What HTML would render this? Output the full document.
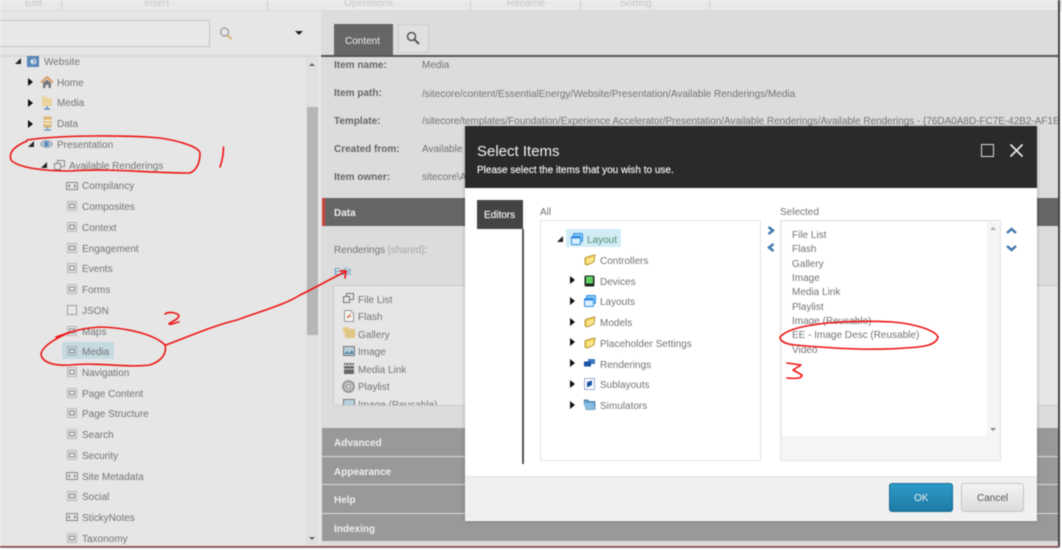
<!DOCTYPE html>
<html>
<head>
<meta charset="utf-8">
<style>
html,body{margin:0;padding:0;background:#fff}
#p{position:relative;width:1062px;height:550px;overflow:hidden;background:#fff;font-family:"Liberation Sans",sans-serif;font-size:10px;color:#747474;filter:blur(.42px)}
#p div,#p span{position:absolute}
.t{white-space:nowrap;line-height:14px;height:14px;margin-top:2px}
.a{width:0;height:0;border-style:solid;border-width:4px 0 4px 5px;border-color:transparent transparent transparent #111}
.o{width:0;height:0;border-style:solid;border-width:0 0 6px 6px;border-color:transparent transparent #222 transparent}
.b{font-weight:bold;color:#666}
.h{color:#eee;font-weight:bold}
svg{position:absolute;overflow:visible}
</style>
</head>
<body>
<div id="p">
<svg width="0" height="0" style="position:absolute"><defs>
<symbol id="d" viewBox="0 0 11 11"><rect x=".5" y=".5" width="9" height="9" fill="none" stroke="#888" stroke-dasharray="1 1"/><rect x="2.5" y="3" width="5" height="4" fill="none" stroke="#888"/></symbol>
<symbol id="c" viewBox="0 0 12 8"><rect x=".5" y=".5" width="11" height="7" fill="none" stroke="#888"/><path d="M4 2.5L2.5 4 4 5.5M8 2.5L9.500 4 8 5.500" fill="none" stroke="#777"/></symbol>
<symbol id="f" viewBox="0 0 12 12"><path d="M1 4L3 3 8 1.500 11 1 10 8 3 11 1 10Z" fill="#f3cf55" stroke="#a88a2a" stroke-width=".8"/><path d="M3 5L10 3 9 8 3 10Z" fill="#fbe68c"/></symbol>
<symbol id="w" viewBox="0 0 12 12"><rect x="2.500" y=".5" width="9" height="8" rx="1" fill="#8cc8fa" stroke="#2f8de0"/><rect x=".5" y="3.500" width="9" height="8" rx="1" fill="#d8eeff" stroke="#2f8de0"/><rect x=".5" y="3.500" width="9" height="2" fill="#2f8de0"/></symbol>
</defs></svg>

<!-- ribbon -->
<div style="left:0;top:0;width:1062px;height:10px;background:#e9e9e9;border-bottom:1px solid #dcdcdc"></div>
<div style="left:61px;top:0;width:1px;height:10px;background:#d2d2d2"></div>
<div style="left:267px;top:0;width:1px;height:10px;background:#d2d2d2"></div>
<div style="left:470px;top:0;width:1px;height:10px;background:#d2d2d2"></div>
<div style="left:580px;top:0;width:1px;height:10px;background:#d2d2d2"></div>
<div style="left:709px;top:0;width:1px;height:10px;background:#d2d2d2"></div>
<div class="t" style="left:25px;top:-5px;color:#c8c8c8">Edit</div>
<div class="t" style="left:144px;top:-5px;color:#c8c8c8">Insert</div>
<div class="t" style="left:344px;top:-5px;color:#c8c8c8">Operations</div>
<div class="t" style="left:507px;top:-5px;color:#c8c8c8">Rename</div>
<div class="t" style="left:620px;top:-5px;color:#c8c8c8">Sorting</div>

<!-- left panel -->
<div style="left:0;top:11px;width:319px;height:535px;background:#e6e6e6"></div>
<div style="left:0;top:55px;width:319px;height:2px;background:#d8d8d8"></div>
<div style="left:-2px;top:20px;width:210px;height:25px;background:#e8e8e8;border:1px solid #c4c4c4"></div>
<svg style="left:219px;top:27px" width="14" height="14"><circle cx="5.500" cy="5" r="4" fill="none" stroke="#999" stroke-width="1.200"/><path d="M8.500 8.500L12.500 12" stroke="#d9b26a" stroke-width="2"/></svg>
<div style="left:295px;top:31px;border-style:solid;border-width:4px 4px 0 4px;border-color:#222 transparent transparent transparent;width:0;height:0"></div>
<div style="left:306px;top:57px;width:13px;height:489px;background:#e0e0e0"></div>
<div style="left:307px;top:107px;width:11px;height:228px;background:#b6b6b6"></div>
<div style="left:309px;top:63px;border-style:solid;border-width:0 3px 3px 3px;border-color:transparent transparent #666 transparent;width:0;height:0"></div>
<div style="left:309px;top:537px;border-style:solid;border-width:3px 3px 0 3px;border-color:#666 transparent transparent transparent;width:0;height:0"></div>
<div style="left:319px;top:11px;width:2px;height:535px;background:#e9e9e9"></div>

<!-- tree -->
<div class="o" style="left:15px;top:58px"></div>
<div style="left:27px;top:56px;width:12px;height:11px;background:#5a86b8"></div>
<svg style="left:30px;top:58px" width="7" height="7"><circle cx="3.500" cy="3.500" r="3" fill="#dfe8f2"/><path d="M2 1L5 3 3 6" stroke="#5a86b8" fill="none"/></svg>
<div class="t" style="left:44px;top:54px">Website</div>
<div class="a" style="left:28px;top:78px"></div>
<svg style="left:41px;top:76px" width="12" height="12"><path d="M0 6.500L6 1 12 6.500" fill="none" stroke="#d9975a" stroke-width="1.800"/><path d="M2 6.500L6 3.500 10 6.500V12H7.500V9H4.500V12H2Z" fill="#77797c"/></svg>
<div class="t" style="left:57px;top:75px">Home</div>
<div class="a" style="left:28px;top:99px"></div>
<svg style="left:41px;top:96px" width="12" height="14"><path d="M1 0H5L6 2H11V10H1Z" fill="#ecd29c"/><path d="M6 10V12M3 13H9" stroke="#5c8fc0" stroke-width="1.400"/></svg>
<div class="t" style="left:57px;top:95px">Media</div>
<div class="a" style="left:28px;top:120px"></div>
<svg style="left:43px;top:117px" width="9" height="14"><rect x="1" y="0" width="7" height="10" fill="#e3bd78" stroke="#c79c50" stroke-width=".6"/><path d="M1 3.500H8M1 6.500H8" stroke="#fff"/><path d="M4.500 10V12M1 13H8" stroke="#5c8fc0" stroke-width="1.300"/></svg>
<div class="t" style="left:57px;top:116px">Data</div>
<div class="o" style="left:28px;top:141px"></div>
<svg style="left:40px;top:138px" width="13" height="12"><path d="M.5 6C3.500 1.500 9.500 1.500 12.500 6 9.500 10.500 3.500 10.500 .5 6Z" fill="#c8d4de" stroke="#8a97a3"/><circle cx="6.500" cy="6" r="2.700" fill="#5d8fbd"/></svg>
<div class="t" style="left:57px;top:137px">Presentation</div>
<div class="o" style="left:41px;top:162px"></div>
<svg style="left:54px;top:160px" width="11" height="10"><rect x="3.500" y=".5" width="7" height="6" fill="#e6e6e6" stroke="#888"/><rect x=".5" y="3.500" width="6" height="6" fill="#e6e6e6" stroke="#888"/></svg>
<div class="t" style="left:69px;top:158px">Available Renderings</div>

<svg style="left:66px;top:182px" width="12" height="8"><use href="#c"/></svg><div class="t" style="left:82px;top:178px">Compilancy</div>
<svg style="left:67px;top:201px" width="11" height="11"><use href="#d"/></svg><div class="t" style="left:82px;top:199px">Composites</div>
<svg style="left:67px;top:222px" width="11" height="11"><use href="#d"/></svg><div class="t" style="left:82px;top:220px">Context</div>
<svg style="left:67px;top:243px" width="11" height="11"><use href="#d"/></svg><div class="t" style="left:82px;top:241px">Engagement</div>
<svg style="left:67px;top:263px" width="11" height="11"><use href="#d"/></svg><div class="t" style="left:82px;top:261px">Events</div>
<svg style="left:67px;top:284px" width="11" height="11"><use href="#d"/></svg><div class="t" style="left:82px;top:282px">Forms</div>
<div style="left:67px;top:305px;width:8px;height:8px;border:1px dashed #999"></div><div class="t" style="left:82px;top:303px">JSON</div>
<svg style="left:67px;top:326px" width="11" height="11"><use href="#d"/></svg><div class="t" style="left:82px;top:324px">Maps</div>
<div style="left:62px;top:342px;width:52px;height:17px;background:#c5d9e1"></div>
<svg style="left:67px;top:346px" width="11" height="11"><use href="#d"/></svg><div class="t" style="left:82px;top:344px">Media</div>
<svg style="left:67px;top:367px" width="11" height="11"><use href="#d"/></svg><div class="t" style="left:82px;top:365px">Navigation</div>
<svg style="left:67px;top:388px" width="11" height="11"><use href="#d"/></svg><div class="t" style="left:82px;top:386px">Page Content</div>
<svg style="left:67px;top:408px" width="11" height="11"><use href="#d"/></svg><div class="t" style="left:82px;top:406px">Page Structure</div>
<svg style="left:67px;top:429px" width="11" height="11"><use href="#d"/></svg><div class="t" style="left:82px;top:427px">Search</div>
<svg style="left:67px;top:450px" width="11" height="11"><use href="#d"/></svg><div class="t" style="left:82px;top:448px">Security</div>
<svg style="left:66px;top:472px" width="12" height="8"><use href="#c"/></svg><div class="t" style="left:82px;top:469px">Site Metadata</div>
<svg style="left:67px;top:491px" width="11" height="11"><use href="#d"/></svg><div class="t" style="left:82px;top:489px">Social</div>
<svg style="left:66px;top:513px" width="12" height="8"><use href="#c"/></svg><div class="t" style="left:82px;top:510px">StickyNotes</div>
<svg style="left:67px;top:533px" width="11" height="11"><use href="#d"/></svg><div class="t" style="left:82px;top:531px">Taxonomy</div>

<!-- right panel -->
<div style="left:321px;top:11px;width:737px;height:535px;background:#dcdcdc"></div>
<div style="left:334px;top:24px;width:59px;height:32px;background:#666"></div>
<div class="t" style="left:345px;top:33px;color:#eee">Content</div>
<div style="left:398px;top:24px;width:29px;height:27px;background:#e0e0e0;border:1px solid #ccc"></div>
<svg style="left:406px;top:31px" width="14" height="14"><circle cx="5.500" cy="5.500" r="4" fill="none" stroke="#555" stroke-width="1.500"/><path d="M8.500 8.500L13 13" stroke="#555" stroke-width="2"/></svg>
<div style="left:321px;top:55px;width:737px;height:2px;background:#555"></div>

<div class="t b" style="left:334px;top:57px">Item name:</div>
<div class="t" style="left:422px;top:57px">Media</div>
<div class="t b" style="left:334px;top:85px">Item path:</div>
<div class="t" style="left:422px;top:86px">/sitecore/content/EssentialEnergy/Website/Presentation/Available Renderings/Media</div>
<div class="t b" style="left:334px;top:113px">Template:</div>
<div class="t" style="left:422px;top:113px;width:636px;overflow:hidden;letter-spacing:-.03px">/sitecore/templates/Foundation/Experience Accelerator/Presentation/Available Renderings/Available Renderings - {76DA0A8D-FC7E-42B2-AF1E</div>
<div class="t b" style="left:334px;top:141px">Created from:</div>
<div class="t" style="left:422px;top:141px">Available Renderings</div>
<div class="t b" style="left:334px;top:169px">Item owner:</div>
<div class="t" style="left:422px;top:169px">sitecore\Admin</div>

<div style="left:322px;top:198px;width:736px;height:28px;background:#666"></div>
<div style="left:322px;top:198px;width:3px;height:28px;background:#d0443e"></div>
<div class="t h" style="left:334px;top:205px">Data</div>
<div class="t" style="left:334px;top:242px">Renderings <span style="position:static;color:#a8a8a8">[shared]</span>:</div>
<div class="t" style="left:334px;top:264px;color:#5a9ac8">Edit</div>

<div style="left:333px;top:285px;width:725px;height:119px;background:#e6e6e6;border-top:1px solid #ccc;border-bottom:1px solid #ccc;border-left:1px solid #ccc;overflow:hidden">
<svg style="left:9px;top:7px" width="11" height="10"><rect x="3.500" y=".5" width="7" height="6" fill="#e6e6e6" stroke="#777"/><rect x=".5" y="3.500" width="6" height="6" fill="#e6e6e6" stroke="#777"/></svg>
<div class="t" style="left:24px;top:6px">File List</div>
<svg style="left:10px;top:24px" width="10" height="12"><path d="M.5.5H6.500L9.500 3.500V11.500H.5Z" fill="#f4f4f4" stroke="#999"/><path d="M3 8C5 8 5 4 7 4M3 6.500H7" stroke="#d9794a" fill="none"/></svg>
<div class="t" style="left:24px;top:23px">Flash</div>
<svg style="left:9px;top:41px" width="12" height="12"><rect x="0" y="0" width="6" height="6" fill="#e8cc90"/><rect x="2" y="2" width="10" height="9" fill="#e3c586"/></svg>
<div class="t" style="left:24px;top:41px">Gallery</div>
<svg style="left:9px;top:60px" width="12" height="10"><rect x=".5" y=".5" width="11" height="9" fill="#b8d0de" stroke="#777"/><path d="M1 8L4 5 6 7 9 4 11 8Z" fill="#5b88a8"/></svg>
<div class="t" style="left:24px;top:58px">Image</div>
<svg style="left:9px;top:77px" width="12" height="11"><rect x="1" y="3" width="10" height="8" fill="#666"/><path d="M1 0H11V2H1Z" fill="#666"/><path d="M3 0V2M6 0V2M9 0V2M1 6H11" stroke="#e6e6e6" stroke-width=".7"/></svg>
<div class="t" style="left:24px;top:76px">Media Link</div>
<svg style="left:8px;top:94px" width="13" height="13"><circle cx="6.500" cy="6.500" r="5.800" fill="#aaa" stroke="#888"/><circle cx="6.500" cy="6.500" r="3.500" fill="none" stroke="#e6e6e6" stroke-dasharray="1.500 1"/><circle cx="6.500" cy="6.500" r="1.200" fill="#e6e6e6"/></svg>
<div class="t" style="left:24px;top:93px">Playlist</div>
<svg style="left:9px;top:113px" width="12" height="10"><rect x=".5" y=".5" width="11" height="9" fill="#b8d0de" stroke="#777"/></svg>
<div class="t" style="left:24px;top:111px">Image (Reusable)</div>
</div>

<div style="left:322px;top:428px;width:736px;height:28px;background:#999"></div>
<div style="left:322px;top:457px;width:736px;height:27px;background:#999"></div>
<div style="left:322px;top:485px;width:736px;height:28px;background:#999"></div>
<div style="left:322px;top:514px;width:736px;height:27px;background:#999"></div>
<div class="t h" style="left:334px;top:435px">Advanced</div>
<div class="t h" style="left:334px;top:464px">Appearance</div>
<div class="t h" style="left:334px;top:492px">Help</div>
<div class="t h" style="left:334px;top:521px">Indexing</div>

<!-- window edges -->
<div style="left:1058px;top:0;width:1.500px;height:547px;background:#444"></div>
<div style="left:0;top:545.500px;width:1059px;height:1px;background:#b5413c"></div>
<div style="left:0;top:546.500px;width:1059px;height:1.500px;background:#777"></div>

<!-- dialog -->
<div style="left:465px;top:126px;width:572px;height:395px;background:#fff;box-shadow:0 0 4px rgba(0,0,0,.25)"></div>
<div style="left:465px;top:126px;width:572px;height:62px;background:#2a2a2a"></div>
<div class="t" style="left:477px;top:142px;color:#f2f2f2;font-size:15px;height:16px;line-height:16px">Select Items</div>
<div class="t" style="left:477px;top:162px;color:#eee;-webkit-text-stroke:.2px #eee">Please select the items that you wish to use.</div>
<div style="left:981px;top:144px;width:11px;height:11px;border:1.500px solid #ddd"></div>
<svg style="left:1010px;top:144px" width="13" height="13"><path d="M.5.5L12.500 12.500M12.500.5L.5 12.500" stroke="#f2f2f2" stroke-width="1.600"/></svg>

<div style="left:477px;top:200px;width:46px;height:29px;background:#444"></div>
<div class="t" style="left:484px;top:207px;color:#eee;-webkit-text-stroke:.2px #eee">Editors</div>
<div style="left:522px;top:229px;width:2px;height:235px;background:#555"></div>

<div class="t" style="left:540px;top:204px">All</div>
<div style="left:540px;top:220px;width:219px;height:239px;background:#fff;border:1px solid #e2e2e2"></div>
<div class="o" style="left:557px;top:236px"></div>
<div style="left:566px;top:229px;width:55px;height:18px;background:#d2ecf6"></div>
<svg style="left:571px;top:233px" width="12" height="12"><use href="#w"/></svg>
<div class="t" style="left:587px;top:232px;color:#4f8f6d">Layout</div>
<svg style="left:584px;top:254px" width="12" height="12"><use href="#f"/></svg>
<div class="t" style="left:600px;top:253px">Controllers</div>
<div class="a" style="left:570px;top:276px"></div>
<svg style="left:584px;top:275px" width="11" height="12"><rect x=".5" y=".5" width="10" height="11" rx="1.500" fill="#222"/><rect x="2" y="1.500" width="7" height="7" fill="#5fd35f"/></svg>
<div class="t" style="left:600px;top:274px">Devices</div>
<div class="a" style="left:570px;top:297px"></div>
<svg style="left:584px;top:295px" width="12" height="12"><use href="#w"/></svg>
<div class="t" style="left:600px;top:294px">Layouts</div>
<div class="a" style="left:570px;top:318px"></div>
<svg style="left:584px;top:316px" width="12" height="12"><use href="#f"/></svg>
<div class="t" style="left:600px;top:315px">Models</div>
<div class="a" style="left:570px;top:338px"></div>
<svg style="left:584px;top:337px" width="12" height="12"><use href="#f"/></svg>
<div class="t" style="left:600px;top:336px">Placeholder Settings</div>
<div class="a" style="left:570px;top:359px"></div>
<svg style="left:584px;top:359px" width="11" height="8"><rect x="4" y="0" width="7" height="5" fill="#3f79c4"/><rect x="0" y="2.500" width="7" height="5" fill="#1d52a8"/></svg>
<div class="t" style="left:600px;top:357px">Renderings</div>
<div class="a" style="left:570px;top:380px"></div>
<svg style="left:584px;top:378px" width="12" height="12"><rect x=".5" y=".5" width="10" height="11" fill="#fff" stroke="#3459b0" stroke-dasharray="1 1"/><path d="M3 4L8 2.500V7L3 9.500Z" fill="#1d52a8"/></svg>
<div class="t" style="left:600px;top:377px">Sublayouts</div>
<div class="a" style="left:570px;top:401px"></div>
<svg style="left:583px;top:399px" width="13" height="11"><path d="M1 1H5L6 2.500H12V10.500H3Z" fill="#5f9ccb" stroke="#3e729e" stroke-width=".7"/><path d="M0 4H10L12 10.500H3Z" fill="#89bde0"/></svg>
<div class="t" style="left:600px;top:398px">Simulators</div>

<svg style="left:767px;top:226px" width="8" height="26"><path d="M1.500 1L6 4.500 1.500 8M6.500 18L2 21.500 6.500 25" fill="none" stroke="#3f76ae" stroke-width="2.400"/></svg>

<div class="t" style="left:780px;top:204px">Selected</div>
<div style="left:780px;top:220px;width:219px;height:239px;background:#f5f5f5;border:1px solid #e2e2e2"></div>
<div style="left:782px;top:222px;width:205px;height:214px;background:#fff"></div>
<div style="left:990px;top:227px;border-style:solid;border-width:0 3px 3px 3px;border-color:transparent transparent #aaa transparent;width:0;height:0"></div>
<div style="left:990px;top:428px;border-style:solid;border-width:3px 3px 0 3px;border-color:#888 transparent transparent transparent;width:0;height:0"></div>
<div class="t" style="left:792px;top:227px">File List</div>
<div class="t" style="left:792px;top:241px">Flash</div>
<div class="t" style="left:792px;top:256px">Gallery</div>
<div class="t" style="left:792px;top:270px">Image</div>
<div class="t" style="left:792px;top:284px">Media Link</div>
<div class="t" style="left:792px;top:299px">Playlist</div>
<div class="t" style="left:792px;top:313px">Image (Reusable)</div>
<div class="t" style="left:792px;top:327px">EE - Image Desc (Reusable)</div>
<div class="t" style="left:792px;top:342px">Video</div>
<svg style="left:1006px;top:228px" width="11" height="23"><path d="M1 5L5.500 1 10 5M1 18L5.500 22 10 18" fill="none" stroke="#3f76ae" stroke-width="2.400"/></svg>

<div style="left:465px;top:476px;width:572px;height:44px;background:#f0f0f0;border-top:1px solid #e4e4e4;box-sizing:border-box"></div>
<div style="left:889px;top:483px;width:64px;height:29px;border-radius:3px;background:linear-gradient(#2b9ac8,#1f7aa5);border:1px solid #1c6f96;box-sizing:border-box"></div>
<div class="t" style="left:914px;top:490px;color:#eee">OK</div>
<div style="left:961px;top:483px;width:63px;height:29px;border-radius:3px;background:linear-gradient(#f4f4f4,#dcdcdc);border:1px solid #c4c4c4;box-sizing:border-box"></div>
<div class="t" style="left:977px;top:490px;color:#555">Cancel</div>

<!-- annotations -->
<svg style="left:0;top:0" width="1062" height="550" fill="none" stroke="#ee1414" stroke-width="1.600" stroke-linecap="round" stroke-linejoin="round">
<path d="M27 140C60 135 125 135 160 138C180 141 199 147 200 153C200 162 197 170 190 173C150 173 110 168 70 171C45 171 18 168 11 160C8 152 15 146 27 141"/>
<path d="M223.500 147C223.500 154 222.500 160 220 167"/>
<path d="M71 332C55 338 42 347 41 354C42 363 55 366 70 365C100 362 125 368 150 365C162 361 167 353 165 345C155 335 130 328 100 327C85 328 72 331 62 335L56 337"/>
<path d="M166 345C185 338 215 325 237 320C255 313 285 305 300 295C315 288 330 279 345 272"/>
<path d="M340 271L346 271L345 278"/>
<path d="M165 314C170 311 178 313 179 316C178 320 170 322 169 324C172 325 176 322 179 322"/>
<path d="M780 337C788 328 810 325 827 323C850 321 875 321 893 322C915 324 935 330 938 337C936 345 925 347 905 348C870 351 830 348 795 345C785 344 780 341 780 337Z"/>
<path d="M787 363L801 365L793 370L802 375C802 378 798 379 787 378"/>
</svg>
</div>
</body>
</html>
